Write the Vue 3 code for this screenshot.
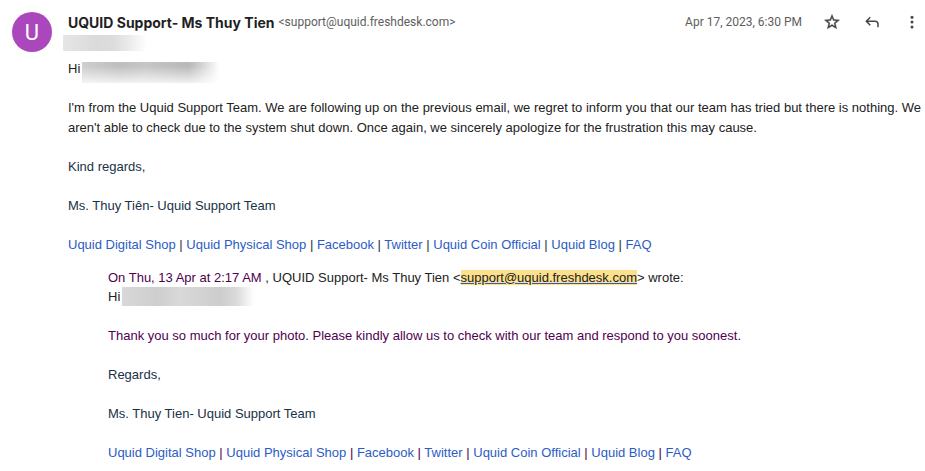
<script setup>
const links = [
  'Uquid Digital Shop',
  'Uquid Physical Shop',
  'Facebook',
  'Twitter',
  'Uquid Coin Official',
  'Uquid Blog',
  'FAQ',
]
</script>

<template>
  <article class="message">
    <div class="avatar" aria-hidden="true">U</div>
    <div class="main">
      <header class="head">
        <h1 class="sender">UQUID Support- Ms Thuy Tien</h1>
        <span class="address">&lt;support@uquid.freshdesk.com&gt;</span>
        <time class="date" datetime="2023-04-17T18:30">Apr 17, 2023, 6:30 PM</time>
        <div class="actions">
          <button type="button" aria-label="Star">
            <svg class="bold" viewBox="0 0 24 24"><path d="M22 9.24l-7.19-.62L12 2 9.19 8.63 2 9.24l5.46 4.73L5.82 21 12 17.27 18.18 21l-1.63-7.03L22 9.24zM12 15.4l-3.76 2.27 1-4.28-3.32-2.88 4.38-.38L12 6.1l1.71 4.04 4.38.38-3.32 2.88 1 4.28L12 15.4z" /></svg>
          </button>
          <button type="button" aria-label="Reply">
            <svg viewBox="0 0 24 24"><path d="M19 19v-4a3 3 0 0 0-3-3H6.83l3.58 3.59L9 17l-6-6 6-6 1.41 1.41L6.83 10H16a5 5 0 0 1 5 5v4z" /></svg>
          </button>
          <button type="button" aria-label="More">
            <svg viewBox="0 0 24 24"><circle cx="12" cy="5.5" r="2" /><circle cx="12" cy="12" r="2" /><circle cx="12" cy="18.5" r="2" /></svg>
          </button>
        </div>
      </header>
      <div class="redacted recipient"></div>

      <div class="body">
        <p class="greeting">Hi <span class="redacted name"></span></p>
        <p>
          I'm from the Uquid Support Team. We are following up on the previous email, we regret to
          inform you that our team has tried but there is nothing. We aren't able to check due to
          the system shut down. Once again, we sincerely apologize for the frustration this may
          cause.
        </p>
        <p class="navy">Kind regards,</p>
        <p class="navy">Ms. Thuy Tiên- Uquid Support Team</p>
        <p class="navy">
          <template v-for="(link, i) in links" :key="link"><template v-if="i"> | </template><a href="#">{{ link }}</a></template>
        </p>

        <blockquote class="quote">
          <p class="intro">
            <span class="plum">On Thu, 13 Apr at 2:17 AM</span> , UQUID Support- Ms Thuy Tien
            &lt;<a class="mark" href="#">support@uquid.freshdesk.com</a>&gt; wrote:
          </p>
          <p class="greeting">Hi <span class="redacted quoted-name"></span></p>
          <p class="plum">
            Thank you so much for your photo. Please kindly allow us to check with our team and
            respond to you soonest.
          </p>
          <p class="navy">Regards,</p>
          <p class="navy">Ms. Thuy Tien- Uquid Support Team</p>
          <p class="plum">
            <template v-for="(link, i) in links" :key="link"><template v-if="i"> | </template><a href="#">{{ link }}</a></template>
          </p>
        </blockquote>
      </div>
    </div>
  </article>
</template>

<style>
body {
  background: #fff;
}
</style>

<style scoped>
.message {
  display: flex;
  gap: 16px;
  padding: 12px 0 0 12px;
  color: #222;
  font-family: "Liberation Sans", Arial, sans-serif;
}
.avatar {
  display: flex;
  flex: none;
  align-items: center;
  justify-content: center;
  width: 40px;
  height: 40px;
  border-radius: 50%;
  background: #ab47bc;
  color: #fff;
  font: 22px Roboto, sans-serif;
}
.main {
  flex: 1;
  min-width: 0;
}
.head {
  display: flex;
  align-items: center;
  height: 20px;
  font-family: Roboto, sans-serif;
  white-space: nowrap;
}
.sender {
  margin: 0 4px 0 0;
  color: #1f1f1f;
  font: bold 14px Inter, sans-serif;
}
.address,
.date {
  color: #5e5e5e;
  font-size: 12px;
}
.date {
  margin-left: auto;
}
.actions {
  display: flex;
  gap: 20px;
  margin: 0 3px 0 20px;
}
.actions button {
  width: 20px;
  height: 20px;
  padding: 0;
  border: 0;
  background: none;
}
.actions svg {
  display: block;
  width: 20px;
  height: 20px;
  padding: 1px;
  box-sizing: border-box;
  fill: #444746;
}
.actions .bold {
  stroke: #444746;
  stroke-width: 0.6;
}
.redacted {
  background: linear-gradient(90deg, #d8d8d8, #cecece 26%, #d9d9d9 42%, #cdcdcd 72%, #dadada 84%, #fff 97%);
}
.recipient {
  width: 84px;
  height: 16px;
  margin: 3px 0 8px -5px;
  background: linear-gradient(90deg, #e6e6e6, #dadada 40%, #dddddd 60%, #ececec 80%, #fff);
}
.body {
  font-size: 13px;
  line-height: 1.5;
}
p {
  margin: 0 0 1.5em;
}
.greeting {
  display: flex;
  gap: 2px;
}
.name {
  width: 140px;
  height: 21px;
  margin: 3px 0 -5px;
  background:
    linear-gradient(180deg, rgb(255 255 255 / 0) 20%, rgb(255 255 255 / 80%)),
    linear-gradient(90deg, #cecece, #bebebe 26%, #c6c6c6 45%, #b8b8b8 76%, #d8d8d8 87%, #fff 98%);
}
.quoted-name {
  width: 136px;
  height: 19px;
}
.navy {
  color: #183247;
}
.plum {
  color: #500050;
}
a {
  color: #2c5cc5;
  text-decoration: none;
}
.quote {
  margin: -6px 0 0 40px;
}
.intro {
  margin: 0;
}
.mark {
  background: #fce08b;
  color: #222;
  text-decoration: underline;
  text-decoration-color: #2c5cc5;
}
</style>
